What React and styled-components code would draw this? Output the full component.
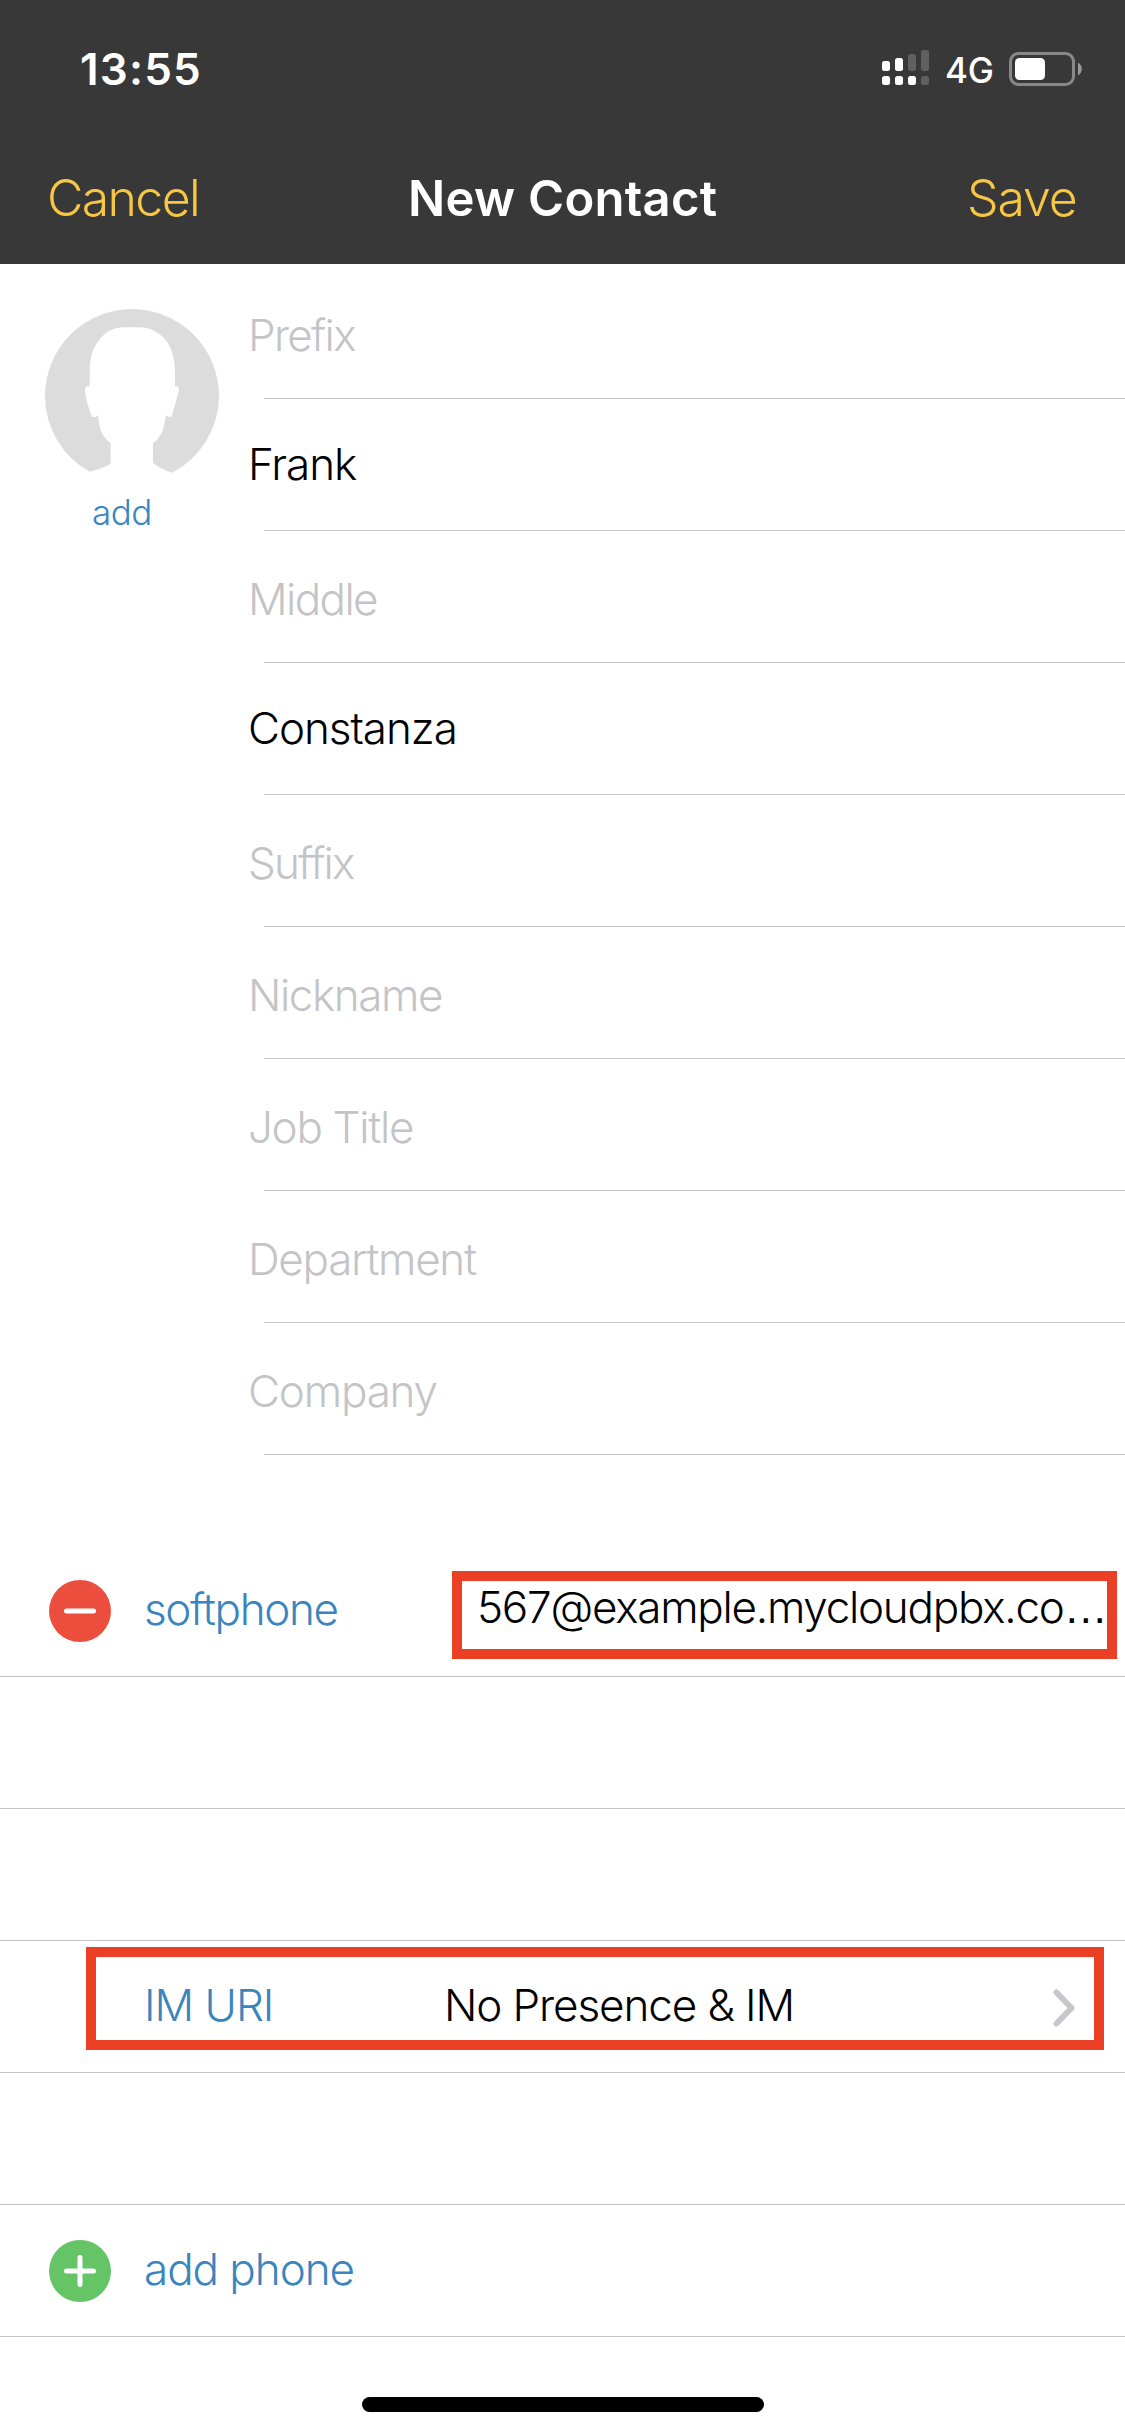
import React from "react";
import styled, { createGlobalStyle } from "styled-components";

const GlobalStyle = createGlobalStyle`
  * {
    box-sizing: border-box;
  }
  body {
    margin: 0;
    background: #ffffff;
    font-family: Inter, "Liberation Sans", sans-serif;
    font-weight: 300;
  }
`;

const Screen = styled.main`
  display: flex;
  flex-direction: column;
  width: 1125px;
  height: 2436px;
  overflow: hidden;
  background: #ffffff;
`;

const Header = styled.header`
  flex: none;
  height: 264px;
  background: #383838;
  color: #ffffff;
`;

const StatusBar = styled.div`
  display: flex;
  height: 132px;
  padding: 0 43px 0 80px;
`;

const Clock = styled.time`
  flex: 1;
  font-size: 44px;
  font-weight: 600;
  line-height: 138px;
  letter-spacing: 1.2px;
`;

const Signal = styled.svg`
  flex: none;
  margin-top: 50px;
`;

const Network = styled.span`
  width: 64px;
  margin-left: 16px;
  font-size: 35px;
  font-weight: 500;
  line-height: 141px;
  letter-spacing: -0.3px;
`;

const Battery = styled.svg`
  flex: none;
  margin-top: 52px;
`;

const NavBar = styled.nav`
  display: grid;
  grid-template-columns: 361px 1fr 158px;
  height: 132px;
  padding-left: 47px;
  line-height: 132px;
`;

const NavButton = styled.a`
  color: #f7c744;
  font-size: 50px;
  letter-spacing: ${(p) => p.$tracking}px;
`;

const Title = styled.h1`
  margin: 0;
  font-size: 49px;
  font-weight: 600;
  line-height: 133px;
  letter-spacing: 0.28px;
`;

const NameSection = styled.section`
  display: flex;
  height: 1188px;
  margin-top: 3px;
`;

const PhotoColumn = styled.div`
  display: flex;
  flex-direction: column;
  width: 248px;
  padding: 42px 0 0 45px;
`;

const AddPhoto = styled.a`
  margin: 4px 0 0 47px;
  color: #3a85bd;
  font-size: 35px;
  line-height: 50px;
  letter-spacing: -0.5px;
`;

const Fields = styled.div`
  flex: 1;
`;

const Field = styled.div`
  height: 132px;
  color: ${(p) => (p.$filled ? "#000000" : "#c4c4c6")};
  font-size: 44px;
  line-height: ${(p) => (p.$filled ? 130 : 136)}px;
  letter-spacing: ${(p) => p.$tracking}px;
  background: linear-gradient(#c5c5c8, #c5c5c8) 16px 131px / 100% 1px no-repeat;
`;

const Details = styled.section`
  margin-top: 90px;
`;

const Row = styled.div`
  position: relative;
  display: flex;
  height: 132px;
  border-bottom: 1px solid #c6c6c9;
  padding-left: 49px;
  font-size: 44px;
  line-height: 128px;
`;

const IconSlot = styled.div`
  width: 95px;
  padding-top: 35px;
  line-height: 0;
`;

const Label = styled.span`
  width: ${(p) => p.$width}px;
  color: #3a85bd;
  letter-spacing: ${(p) => p.$tracking}px;
`;

const Value = styled.span`
  flex: 1;
  color: #000000;
  white-space: nowrap;
  line-height: ${(p) => p.$line}px;
  letter-spacing: ${(p) => p.$tracking}px;
`;

const Ellipsis = styled.span`
  font-family: "Liberation Sans", sans-serif;
  line-height: 1;
`;

const Chevron = styled.svg`
  flex: none;
  margin: 47px 49px 0 0;
`;

const Highlight = styled.div`
  position: absolute;
  top: ${(p) => p.$top}px;
  left: ${(p) => p.$left}px;
  width: ${(p) => p.$width}px;
  height: ${(p) => p.$height}px;
  border: 10px solid #ec4026;
`;

const HomeIndicator = styled.div`
  width: 402px;
  height: 15px;
  margin: 60px 0 0 362px;
  border-radius: 8px;
  background: #000000;
`;

const FIELDS = [
  { text: "Prefix", tracking: -1.7 },
  { text: "Frank", tracking: -1.05, filled: true },
  { text: "Middle", tracking: -1.62 },
  { text: "Constanza", tracking: -1.05, filled: true },
  { text: "Suffix", tracking: -1.8 },
  { text: "Nickname", tracking: -1.42 },
  { text: "Job Title", tracking: -1.32 },
  { text: "Department", tracking: -1.3 },
  { text: "Company", tracking: -1.2 },
];

const SIGNAL_TOP = [
  { y: 11, h: 10, on: true },
  { y: 8, h: 13, on: true },
  { y: 4, h: 17, on: false },
  { y: 0, h: 21, on: false },
];

function SignalIcon() {
  return (
    <Signal width="47" height="36" viewBox="0 0 47 36">
      {SIGNAL_TOP.map((bar, i) => (
        <g key={i}>
          <rect x={i * 13} y={bar.y} width="8" height={bar.h} rx="2.5" fill={bar.on ? "#fff" : "#606060"} />
          <rect x={i * 13} y="26" width="8" height="9" rx="2.5" fill={i < 3 ? "#fff" : "#606060"} />
        </g>
      ))}
    </Signal>
  );
}

function BatteryIcon() {
  return (
    <Battery width="73" height="34" viewBox="0 0 73 34">
      <rect x="1.5" y="1.5" width="63" height="31" rx="8" fill="none" stroke="#888" strokeWidth="3" />
      <rect x="6" y="6" width="30" height="22" rx="4.5" fill="#fff" />
      <path d="M69 10.7c5 2.200 5 10.400 0 12.600z" fill="#999" />
    </Battery>
  );
}

function Avatar() {
  return (
    <svg width="174" height="174" viewBox="135 117 522 522">
      <path
        fill="#dcdcdc"
        d="M269 605A261 261 0 0 1 135 378A261 261 0 0 1 657 378A261 261 0 0 1 517 608Q480 596 459 578V520Q487 497 491 470Q497 449 498 434Q503 443 512 441Q516 439 517 431L536 366Q539 347 525 349V310C524 252 511 219 481 194Q452 172 420 172H372C342 172 318 184 298 209C275 237 269 267 269 310V349Q253 345 255 366Q259 396 270 424Q274 442 281 442Q290 442 294 434Q295 458 302 480Q310 502 332 520V576Q332 582 326 585Q300 598 269 605Z"
      />
    </svg>
  );
}

function RoundIcon({ color, plus }) {
  return (
    <svg width="62" height="62" viewBox="0 0 62 62">
      <circle cx="31" cy="31" r="31" fill={color} />
      <path
        d={plus ? "M17.500 31H44.500M31 17.500V44.500" : "M17.500 31H44.500"}
        stroke="#fff"
        strokeWidth="5"
        strokeLinecap="round"
      />
    </svg>
  );
}

export default function App() {
  return (
    <Screen>
      <GlobalStyle />
      <Header>
        <StatusBar>
          <Clock>13:55</Clock>
          <SignalIcon />
          <Network>4G</Network>
          <BatteryIcon />
        </StatusBar>
        <NavBar>
          <NavButton $tracking={-1.64}>Cancel</NavButton>
          <Title>New Contact</Title>
          <NavButton $tracking={-1.1}>Save</NavButton>
        </NavBar>
      </Header>

      <NameSection>
        <PhotoColumn>
          <Avatar />
          <AddPhoto>add</AddPhoto>
        </PhotoColumn>
        <Fields>
          {FIELDS.map((f) => (
            <Field key={f.text} $filled={f.filled} $tracking={f.tracking}>
              {f.text}
            </Field>
          ))}
        </Fields>
      </NameSection>

      <Details>
        <Row>
          <IconSlot>
            <RoundIcon color="#eb4e3d" />
          </IconSlot>
          <Label $width={333} $tracking={-1.38}>softphone</Label>
          <Value $line={124} $tracking={-1.26}>
            567@example.mycloudpbx.co<Ellipsis>…</Ellipsis>
          </Value>
          <Highlight $top={26} $left={452} $width={665} $height={88} />
        </Row>
        <Row />
        <Row />
        <Row>
          <IconSlot />
          <Label $width={300} $tracking={-1}>IM URI</Label>
          <Value $line={128} $tracking={-1.1}>{"No Presence & IM"}</Value>
          <Chevron width="24" height="40" viewBox="0 0 24 40">
            <path
              d="M4.500 4.500L19.500 20L4.500 35.500"
              fill="none"
              stroke="#c7c7cc"
              strokeWidth="6"
              strokeLinecap="round"
              strokeLinejoin="round"
            />
          </Chevron>
          <Highlight $top={6} $left={86} $width={1018} $height={103} />
        </Row>
        <Row />
        <Row>
          <IconSlot>
            <RoundIcon color="#65c466" plus />
          </IconSlot>
          <Label $width={400} $tracking={-1.04}>add phone</Label>
        </Row>
      </Details>

      <HomeIndicator />
    </Screen>
  );
}
